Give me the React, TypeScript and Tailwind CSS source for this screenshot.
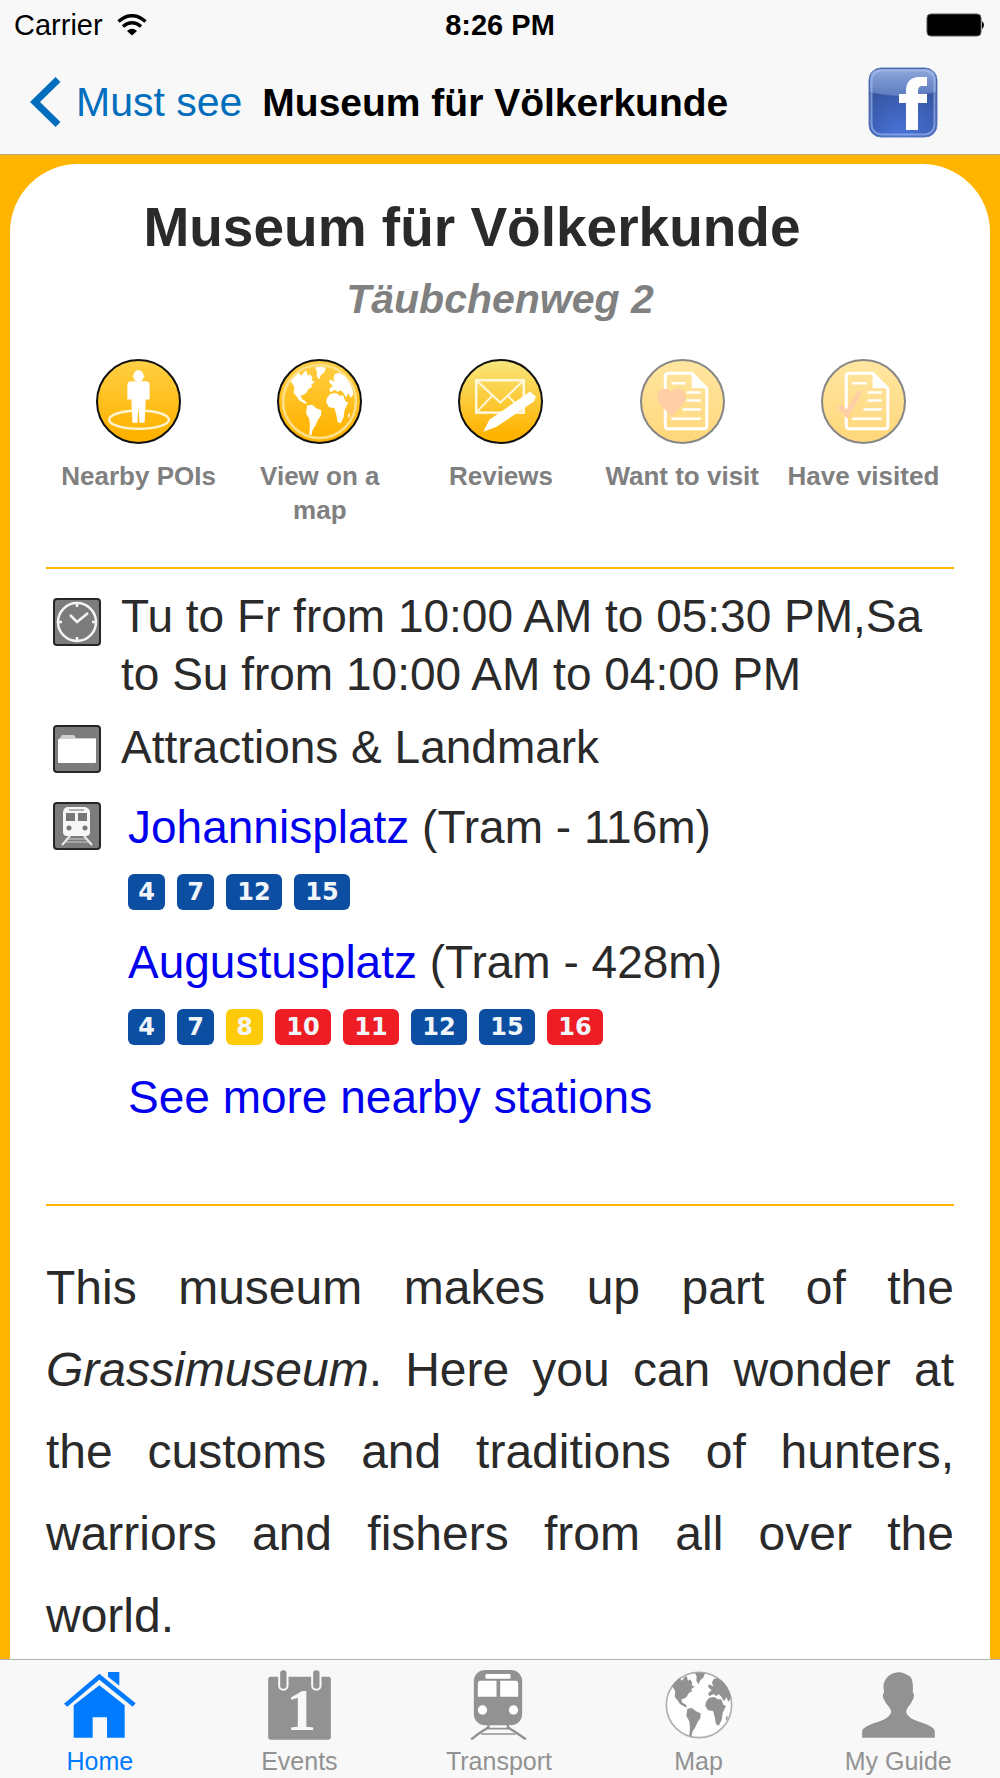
import { ReactNode } from 'react';

const actions = [
  { label: 'Nearby POIs', icon: <PersonPin /> },
  { label: 'View on a map', icon: <GlobeBadge /> },
  { label: 'Reviews', icon: <ReviewBadge /> },
  { label: 'Want to visit', icon: <DocBadge mark="heart" />, faded: true },
  { label: 'Have visited', icon: <DocBadge mark="check" />, faded: true },
];

const lineColors: Record<string, string> = {
  blue: 'bg-[#0b4ea2]',
  yellow: 'bg-[#ffcb08]',
  red: 'bg-[#ee1c25]',
};

const stations = [
  {
    name: 'Johannisplatz',
    info: '(Tram - 116m)',
    lines: [['4', 'blue'], ['7', 'blue'], ['12', 'blue'], ['15', 'blue']],
  },
  {
    name: 'Augustusplatz',
    info: '(Tram - 428m)',
    lines: [
      ['4', 'blue'], ['7', 'blue'], ['8', 'yellow'], ['10', 'red'],
      ['11', 'red'], ['12', 'blue'], ['15', 'blue'], ['16', 'red'],
    ],
  },
];

const tabs = [
  { label: 'Home', icon: <HomeIcon />, active: true },
  { label: 'Events', icon: <CalendarIcon /> },
  { label: 'Transport', icon: <TrainIcon /> },
  { label: 'Map', icon: <GlobeIcon /> },
  { label: 'My Guide', icon: <UserIcon /> },
];

function Continents() {
  return (
    <>
      <path d="M36 66 46 54 58 42 66 50 73 40 80 36 84 50 90 46 97 56 95 64 104 68 94 75 96 82 86 88 80 98 72 104 64 106 67 116 76 121 82 130 74 128 60 120 52 108 44 98 46 82Z" />
      <path d="M105 27Q119 23 135 28L130 41 121 48 116 61 109 50 110 38Z" />
      <path d="M82 134 96 132 108 142 122 148 121 163 113 174 106 190 98 202 94 218 88 216 90 190 88 172 79 156Z" />
      <path d="M146 103 158 99 168 101 172 106 184 106 190 122 198 126 188 146 185 168 176 185 168 180 164 158 159 141 144 139 136 126 138 114Z" />
      <path d="M156 56 160 46 172 42 188 52 202 70 211 92 212 104 205 113 199 100 192 112 184 98 177 91 168 96 161 90 147 97 145 87 155 79 147 72 150 63 160 67Z" />
      <path d="M144 66 148 60 152 66 147 72ZM197 163 202 154 203 162 199 170Z" />
    </>
  );
}

function Badge({ id, top = '#ffcf45', children }: { id: string; top?: string; children: ReactNode }) {
  return (
    <svg viewBox="0 0 84 84" className="size-[85px]">
      <defs>
        <linearGradient id={id} x1="0" y1="0" x2="0" y2="1">
          <stop offset="0" stopColor={top} />
          <stop offset="0.9" stopColor="#ffb300" />
        </linearGradient>
      </defs>
      <circle cx="42" cy="42" r="41" fill={`url(#${id})`} stroke="#111" strokeWidth="2" />
      {children}
    </svg>
  );
}

function PersonPin() {
  return (
    <Badge id="poi">
      <ellipse cx="42.5" cy="60" rx="29.5" ry="9" fill="none" stroke="#fff3cf" strokeWidth="2.5" />
      <path d="M42 11c3 0 4.500 2 5 5l1 1-1 1c-.5 2.500-2 4.500-5 4.500s-4.500-2-5-4.500l-1-1 1-1c.5-3 2-5 5-5Z" fill="#fff" />
      <path d="M35 22h14q4 0 4 4v14h-4v4l-1 19h-5l-1-17-1 17h-5l-1-19v-4h-4V26q0-4 4-4Z" fill="#fff" />
    </Badge>
  );
}

function GlobeBadge() {
  return (
    <Badge id="globe">
      <circle cx="42" cy="42" r="36" fill="none" stroke="#ffe08a" strokeWidth="2.500" />
      <g transform="translate(42 42) scale(.35) translate(-117 -123)" fill="#fff">
        <Continents />
      </g>
    </Badge>
  );
}

function ReviewBadge() {
  return (
    <Badge id="review" top="#f8e67c">
      <g fill="none" stroke="#fff8dc" strokeWidth="2.5">
        <rect x="18" y="21" width="47" height="32" />
        <path d="M18 21 42 43 65 21M18 53 34 36M65 53 49 36" strokeWidth="2" />
      </g>
      <path d="M25 72 31 60 67 35 71 32 77 37 75 42 38 67Z" fill="#fff" />
    </Badge>
  );
}

function DocBadge({ mark }: { mark: 'heart' | 'check' }) {
  return (
    <Badge id={mark}>
      <g fill="none" stroke="#fff" strokeWidth="3">
        <path d="M51 14H28q-3 0-3 3v49q0 3 3 3h35q3 0 3-3V29Z" strokeLinejoin="round" />
        <path d="M31 24h14M46 33h14M46 41h14M42 50h18M31 59h29" strokeWidth="2.500" />
      </g>
      <path d="M51 13v16h16Z" fill="#fff" />
      {mark === 'heart' ? (
        <path d="M31 57C25 49 17 45 17 37c0-8 10-10 14-4 4-6 14-4 14 4 0 8-8 12-14 20Z" fill="#ff9f52" />
      ) : (
        <path d="M16 48l4-3 5 5L38 30l2 4-14 25Z" fill="#ff9f52" />
      )}
    </Badge>
  );
}

function InfoIcon({ children }: { children: ReactNode }) {
  return (
    <svg viewBox="0 0 48 48" className="size-12">
      <rect x="1" y="1" width="46" height="46" rx="3" fill="#7c7c7c" stroke="#262626" strokeWidth="2" />
      {children}
    </svg>
  );
}

function ClockInfo() {
  return (
    <InfoIcon>
      <g fill="none" stroke="#f4f4f4" strokeWidth="2.5">
        <circle cx="24" cy="24" r="19" />
        <path d="M17 17 24 24 35 15" />
        <path d="M24 5v4M24 39v4M5 24h4M39 24h4" />
      </g>
    </InfoIcon>
  );
}

function FolderInfo() {
  return (
    <InfoIcon>
      <path d="M6 14 9 10H21L23 13H43V18H5Z" fill="#d0d0d0" />
      <rect x="5" y="14" width="38" height="24" rx="1" fill="#fff" />
    </InfoIcon>
  );
}

function TrainInfo() {
  return (
    <InfoIcon>
      <path d="M14 5H32Q37 6 37 11V30Q37 34 33 34H14Q10 34 10 30V11Q10 6 14 5Z" fill="#f6f6f6" />
      <path d="M13 11h9v8h-9ZM25 11h9v8h-9Z" fill="#777" />
      <path d="M16 8h15" stroke="#999" strokeWidth="1.500" />
      <circle cx="16" cy="26" r="2.500" fill="#777" />
      <circle cx="32" cy="26" r="2.500" fill="#777" />
      <path d="M17 34 9 43M31 34 39 43" stroke="#eee" strokeWidth="2" />
      <path d="M15 37h18M12 40h24" stroke="#ccc" strokeWidth="1" />
    </InfoIcon>
  );
}

function HomeIcon() {
  return (
    <svg viewBox="192 90 216 210" className="h-[70px] w-[72px]" fill="currentColor">
      <path d="M192 191 298 101 407 190 398 200 298 119 202 200Z" />
      <path d="M221 196 298 136 374 196V293H321V232H278V293H221Z" />
      <path d="M324 96h34v41L324 110Z" />
    </svg>
  );
}

function CalendarIcon() {
  return (
    <svg viewBox="795 90 212 210" className="h-[70px] w-[71px] overflow-visible" fill="currentColor">
      <rect x="807" y="110" width="188" height="189" rx="7" />
      <g stroke="#f8f8f8" strokeWidth="6">
        <rect x="840" y="88" width="25" height="61" rx="12" />
        <rect x="939" y="88" width="25" height="61" rx="12" />
      </g>
      <text x="906" y="270" textAnchor="middle" fontSize="180" fontWeight="700" fontFamily="Liberation Serif, serif" fill="#f8f8f8">1</text>
    </svg>
  );
}

function TrainIcon() {
  return (
    <svg viewBox="192 90 212 210" className="h-[70px] w-[71px]" fill="currentColor">
      <rect x="224" y="90" width="145" height="166" rx="34" />
      <g fill="#fff">
        <rect x="259" y="102" width="75" height="14" rx="3" />
        <path d="M242 122h50v48h-56v-40q0-8 6-8ZM303 122h48q6 0 6 8v40h-54Z" />
        <circle cx="250" cy="210" r="14" />
        <circle cx="343" cy="210" r="14" />
      </g>
      <g fill="none" stroke="currentColor">
        <path d="M268 254V262L240 280 216 298M326 254V262L354 280 380 298" strokeWidth="7" />
        <path d="M262 266H333M246 282H350" strokeWidth="5" />
      </g>
    </svg>
  );
}

function GlobeIcon() {
  return (
    <svg viewBox="12 18 210 210" className="size-[70px]" fill="currentColor">
      <circle cx="117" cy="123" r="98" fill="#fff" stroke="#b0b0b0" strokeWidth="5" />
      <Continents />
    </svg>
  );
}

function UserIcon() {
  return (
    <svg viewBox="189 330 218 210" className="h-[70px] w-[73px]" fill="currentColor">
      <path d="M298 337C315 337 322 345 332 349 341 358 342 376 341 398 347 400 345 414 339 422 335 434 322 442 321 456 325 472 345 481 365 487 386 494 402 501 407 512V533H189V512C194 501 215 492 233 487 253 481 273 470 276 456 276 442 260 434 257 422 250 414 249 401 255 398 253 385 251 372 258 361 266 346 281 338 298 337Z" />
    </svg>
  );
}

function WifiIcon() {
  return (
    <svg viewBox="0 0 30 22" className="h-[22px] w-[30px]" fill="none" stroke="#000" strokeWidth="3.500">
      <path d="M1.500 7.500Q15-4 28.500 7.500M6 12.500Q15 5 24 12.500" />
      <path d="M10 17Q15 12.500 20 17L15 21.500Z" fill="#000" stroke="none" />
    </svg>
  );
}

function FacebookIcon() {
  return (
    <svg viewBox="0 0 70 71" className="h-[71px] w-[70px]">
      <defs>
        <radialGradient id="fb" cx=".5" cy="1" r=".8">
          <stop offset="0" stopColor="#4a74dc" />
          <stop offset="1" stopColor="#35549f" />
        </radialGradient>
        <linearGradient id="fbGloss" x1="0" y1="0" x2="0" y2="1">
          <stop offset="0" stopColor="#8ea6dc" />
          <stop offset="1" stopColor="#5b7bbd" />
        </linearGradient>
      </defs>
      <rect x="1" y="1" width="68" height="69" rx="12" fill="url(#fb)" stroke="#5f7db8" />
      <path d="M2 25V13Q2 2 13 2H57Q68 2 68 13V25Q35 33 2 25Z" fill="url(#fbGloss)" />
      <rect x="3.500" y="3.500" width="63" height="64" rx="10" fill="none" stroke="#a9c0f0" strokeOpacity=".6" strokeWidth="2" />
      <path d="M38 63V36H31V27H38V24C38 15 43 10 51 10H59V19H54Q50 19 50 24V27H59V36H50V63Z" fill="#fff" />
    </svg>
  );
}

export default function App() {
  return (
    <div className="flex min-h-screen flex-col bg-[#ffb400] font-['Liberation_Sans',Arial,sans-serif] text-[#2a2a2a]">
      <header className="border-b border-[#b9ab84] bg-[#f8f8f8] text-black">
        <div className="grid h-[50px] grid-cols-3 items-center px-3.5 text-[29px] leading-none">
          <div className="flex items-center gap-3.5">
            <span>Carrier</span>
            <WifiIcon />
          </div>
          <span className="text-center font-bold">8:26 PM</span>
          <svg viewBox="0 0 60 24" className="h-6 w-[60px] justify-self-end">
            <rect x="1" y="1" width="54" height="22" rx="4" fill="#000" stroke="#555" />
            <path d="M56 8q4 4 0 8Z" fill="#000" />
          </svg>
        </div>
        <nav className="flex h-[104px] items-center pr-[62px] pl-[30px]">
          <a href="#must-see" className="flex items-center gap-[15px] text-[41px] leading-none text-[#006ebc]">
            <svg viewBox="0 0 31 50" className="h-[50px] w-[31px]" fill="none" stroke="currentColor" strokeWidth="7">
              <path d="M28 2.500 5 25 28 47.500" />
            </svg>
            Must see
          </a>
          <span className="ml-5 text-[39px] leading-none font-bold">Museum für Völkerkunde</span>
          <button aria-label="Share on Facebook" className="ml-auto">
            <FacebookIcon />
          </button>
        </nav>
      </header>

      <main className="flex flex-1 flex-col px-2.5 pt-[9px]">
        <article className="flex-1 rounded-t-[68px] bg-white px-9 pt-[31px]">
          <h1 className="pr-14 text-center text-[55px] leading-[64px] font-bold">Museum für Völkerkunde</h1>
          <p className="mt-4 text-center text-[41px] leading-[48px] font-bold text-[#808080] italic">Täubchenweg 2</p>

          <div className="mt-9 grid grid-cols-5 pl-0.5">
            {actions.map((action) => (
              <button key={action.label} className="flex flex-col items-center px-2 text-[26px] leading-[34px] font-bold text-[#808080]">
                <span className={action.faded ? 'opacity-50' : ''}>{action.icon}</span>
                <span className="mt-[15px]">{action.label}</span>
              </button>
            ))}
          </div>

          <hr className="mt-10 border-t-2 border-[#ffb400]" />

          <section className="mt-[18px] text-[46px] leading-[58px]">
            <div className="flex items-start gap-5 pl-[7px]">
              <span className="shrink-0 pt-[11px]"><ClockInfo /></span>
              <p>Tu to Fr from 10:00 AM to 05:30 PM,Sa to Su from 10:00 AM to 04:00 PM</p>
            </div>
            <div className="mt-[15px] flex items-start gap-5 pl-[7px]">
              <span className="shrink-0 pt-[7px]"><FolderInfo /></span>
              <p>Attractions &amp; Landmark</p>
            </div>
            <div className="mt-[22px] flex items-start gap-[27px] pl-[7px]">
              <span className="shrink-0 pt-1"><TrainInfo /></span>
              <div>
                {stations.map((station) => (
                  <div key={station.name} className="mb-[23px]">
                    <p>
                      <a href="#station" className="text-[#0000ee]">{station.name}</a> {station.info}
                    </p>
                    <div className="mt-[18px] flex gap-3">
                      {station.lines.map(([line, color]) => (
                        <span
                          key={line}
                          className={`flex h-9 items-center justify-center rounded-md font-['DejaVu_Sans',Verdana,sans-serif] text-[24px] leading-none font-bold text-[#f2f5fa] ${line.length > 1 ? 'w-14' : 'w-[37px]'} ${lineColors[color]}`}
                        >
                          {line}
                        </span>
                      ))}
                    </div>
                  </div>
                ))}
                <a href="#stations" className="block text-[#0000ee]">See more nearby stations</a>
              </div>
            </div>
          </section>

          <hr className="mt-[78px] border-t-2 border-[#ffb400]" />

          <p className="mt-[41px] text-justify text-[48px] leading-[82px]">
            This museum makes up part of the <em>Grassimuseum</em>. Here you can wonder at the customs and
            traditions of hunters, warriors and fishers from all over the world.
          </p>
        </article>
      </main>

      <footer className="border-t border-[#b4b4b4] bg-[#f8f8f8]">
        <nav className="grid grid-cols-5 pt-2.5 pr-0.5 pb-0.5">
          {tabs.map((tab) => (
            <a
              key={tab.label}
              href="#tab"
              className={`flex flex-col items-center gap-1.5 text-[25px] leading-[30px] ${tab.active ? 'text-[#007aff]' : 'text-[#929292]'}`}
            >
              {tab.icon}
              {tab.label}
            </a>
          ))}
        </nav>
      </footer>
    </div>
  );
}
